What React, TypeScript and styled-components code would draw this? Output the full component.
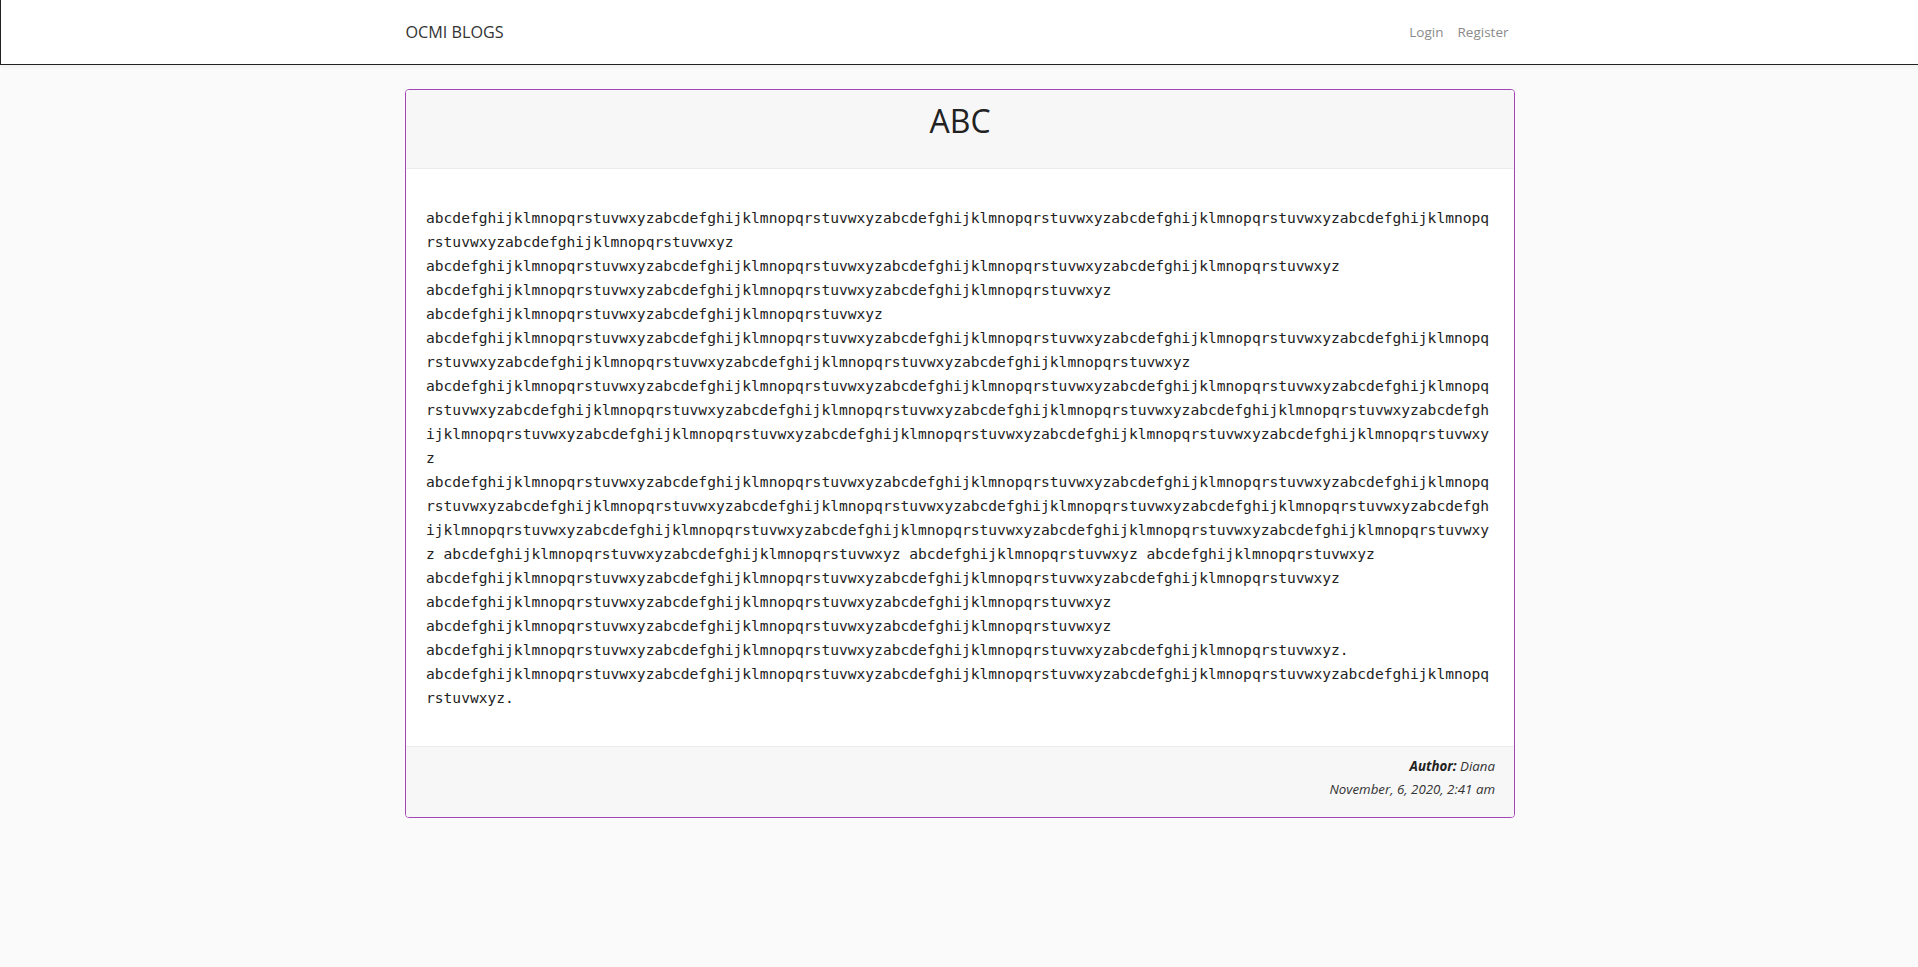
import React from "react";
import styled, { createGlobalStyle } from "styled-components";

const GlobalStyle = createGlobalStyle`
  html, body {
    margin: 0;
    padding: 0;
    background: #fafafa;
    font-family: "Open Sans", "Noto Sans", sans-serif;
    color: #212529;
  }
  * { box-sizing: border-box; }
`;

const NavBar = styled.nav`
  background: #fff;
  border-left: 1px solid #222;
  border-bottom: 1px solid #222;
  height: 65px;
  box-shadow: 0 2px 4px rgba(0, 0, 0, 0.04);
`;

const Container = styled.div`
  max-width: 1140px;
  margin: 0 auto;
  padding: 0 14px 0 16px;
`;

const NavInner = styled(Container)`
  height: 100%;
  display: flex;
  align-items: center;
  justify-content: space-between;
`;

const Brand = styled.a`
  font-size: 16.2px;
  color: #333;
  text-decoration: none;
`;

const NavLinks = styled.div`
  display: flex;
  align-items: center;
`;

const NavLink = styled.a`
  font-size: 13.5px;
  color: #8a8a8a;
  text-decoration: none;
  padding: 0 7px;
`;

const Main = styled(Container)`
  padding-top: 24px;
`;

const Card = styled.article`
  background: #fff;
  border: 1px solid #a346b4;
  border-radius: 4px;
  overflow: hidden;
`;

const CardHeader = styled.header`
  background: #f7f7f7;
  border-bottom: 1px solid #ebebeb;
  padding: 12px 20px 28px;
  text-align: center;
`;

const Title = styled.h1`
  margin: 0;
  font-size: 32px;
  font-weight: 400;
  line-height: 1.2;
  color: #222;
`;

const CardBody = styled.section`
  padding: 37px 20px 36px;
  font-family: "DejaVu Sans Mono", "Liberation Mono", monospace;
  font-size: 14.6px;
  line-height: 24px;
  color: #222;
  word-break: break-all;
`;

const Line = styled.div``;

const CardFooter = styled.footer`
  background: #f7f7f7;
  border-top: 1px solid #ebebeb;
  padding: 8px 19px 16px;
  text-align: right;
  font-size: 13.3px;
  line-height: 23px;
  font-style: italic;
  color: #333;
`;

const FooterLine = styled.div``;

const Strong = styled.b`
  font-weight: 700;
  color: #222;
`;

const A = "abcdefghijklmnopqrstuvwxyz";
const rep = (n: number) => A.repeat(n);

const lines: string[] = [
  rep(6),
  rep(4),
  rep(3),
  rep(2),
  rep(8),
  rep(14),
  `${rep(14)} ${rep(2)} ${A} ${A}`,
  rep(4),
  rep(3),
  rep(3),
  `${rep(4)}.`,
  `${rep(5)}.`,
];

export default function App() {
  return (
    <>
      <GlobalStyle />
      <NavBar>
        <NavInner>
          <Brand href="#">OCMI BLOGS</Brand>
          <NavLinks>
            <NavLink href="#">Login</NavLink>
            <NavLink href="#">Register</NavLink>
          </NavLinks>
        </NavInner>
      </NavBar>
      <Main>
        <Card>
          <CardHeader>
            <Title>ABC</Title>
          </CardHeader>
          <CardBody>
            {lines.map((l, i) => (
              <Line key={i}>{l}</Line>
            ))}
          </CardBody>
          <CardFooter>
            <FooterLine>
              <Strong>Author:</Strong> Diana
            </FooterLine>
            <FooterLine>November, 6, 2020, 2:41 am</FooterLine>
          </CardFooter>
        </Card>
      </Main>
    </>
  );
}
